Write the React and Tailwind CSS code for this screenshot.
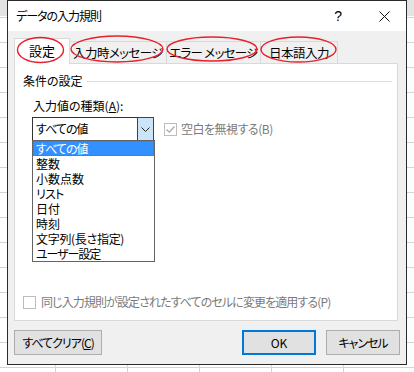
import React from "react";

const items = [
  ["すべての値", "tracking-[-1px]"],
  ["整数", ""],
  ["小数点数", ""],
  ["リスト", "tracking-[-0.8px]"],
  ["日付", ""],
  ["時刻", ""],
  ["文字列(長さ指定)", "tracking-[-0.3px]"],
  ["ユーザー設定", "tracking-[-1.1px]"],
];

function Check({ checked }) {
  return (
    <div className="w-[13px] h-[13px] border border-[#bcbcbc] bg-white flex items-center justify-center shrink-0">
      {checked && (
        <svg width="11" height="11" viewBox="0 0 11 11">
          <path d="M1.5 5.5 L4.2 8.2 L9.5 2.5" fill="none" stroke="#a6a6a6" strokeWidth="1.2" />
        </svg>
      )}
    </div>
  );
}

export default function App() {
  return (
    <div className="relative w-[414px] h-[372px] overflow-hidden bg-white [background-image:linear-gradient(to_bottom,#e3e3e3_16px,transparent_16px),linear-gradient(to_bottom,#d4d4d4_1px,transparent_1px),linear-gradient(to_right,#d4d4d4_1px,transparent_1px)] [background-size:100%_16px,72px_25px,72px_25px] [background-repeat:no-repeat,repeat,repeat] [background-position:0_0,55px_17px,55px_17px] font-['Noto_Sans_CJK_JP','Noto_Sans',sans-serif] [font-feature-settings:'palt'] text-[12px] leading-[16px] text-black">
      <div className="ml-[7px] w-[400px] h-[365px] border border-[#2b2b2b] bg-[#f0f0f0] flex flex-col">
        {/* title bar */}
        <div className="h-[30px] bg-white flex items-center pl-[8px] shrink-0">
          <span className="text-[12px] tracking-[-1px]">データの入力規則</span>
          <span className="ml-auto text-[14px] font-['Liberation_Sans',sans-serif] mr-[37px]">?</span>
          <svg width="11" height="11" viewBox="0 0 11 11" className="mr-[16px]">
            <path d="M0.5 0.5 L10.5 10.5 M10.5 0.5 L0.5 10.5" stroke="#111" strokeWidth="1" />
          </svg>
        </div>
        {/* body */}
        <div className="flex-1 flex flex-col px-[6px] pt-[7px]">
          {/* tabs */}
          <div className="flex items-end h-[25px] relative z-10">
            <div className="w-[56px] h-[26px] -mb-px bg-white border border-b-0 border-[#d9d9d9] flex items-center justify-center pb-[2px] text-[13px]">設定</div>
            <div className="w-[97px] h-[22px] bg-[#f0f0f0] border border-l-0 border-b-0 border-[#d9d9d9] flex items-center justify-center tracking-[-0.6px] text-[12.5px]">入力時メッセージ</div>
            <div className="w-[94px] h-[22px] bg-[#f0f0f0] border border-l-0 border-b-0 border-[#d9d9d9] flex items-center justify-center tracking-[-0.7px] text-[12.5px]">エラー メッセージ</div>
            <div className="w-[77px] h-[22px] bg-[#f0f0f0] border border-l-0 border-b-0 border-[#d9d9d9] flex items-center justify-center tracking-[-0.5px] text-[12.5px]">日本語入力</div>
          </div>
          {/* panel */}
          <div className="w-[384px] h-[258px] bg-white border border-[#d9d9d9] flex flex-col">
            <div className="mt-[9px] h-[16px] flex items-center pl-[8px] pr-[5px]">
              <span>条件の設定</span>
              <div className="flex-1 h-px bg-[#dcdcdc] ml-[4px]" />
            </div>
            <div className="mt-[9px] h-[16px] pl-[18px]">
              入力値の種類(<span className="underline">A</span>):
            </div>
            <div className="mt-[3px] flex items-center pl-[17px]">
              <div className="relative w-[122px] h-[24px] border border-[#333] flex items-center">
                <span className="pl-[3px] flex-1 tracking-[-1px]">すべての値</span>
                <div className="w-[17px] h-[24px] -mr-px -my-px border border-[#005499] bg-[#cce4f7] flex items-center justify-center">
                  <svg width="9" height="5" viewBox="0 0 9 5">
                    <path d="M0.5 0.5 L4.5 4.5 L8.5 0.5" fill="none" stroke="#222" strokeWidth="1" />
                  </svg>
                </div>
                {/* dropdown list */}
                <div className="absolute left-[-1px] top-[22px] w-[123px] border border-[#646464] bg-white flex flex-col z-20">
                  {items.map(([t, tr], i) => (
                    <div
                      key={t}
                      className={
                        i === 0
                          ? "h-[15px] leading-[13px] pl-[2px] bg-[#3390ff] text-white border border-dotted border-[#b06010] " + tr
                          : "h-[15px] leading-[15px] pl-[3px] " + tr
                      }
                    >
                      {t}
                    </div>
                  ))}
                </div>
              </div>
              <div className="ml-[10px] flex items-center gap-[4px] text-[#7a7a7a]">
                <Check checked />
                <span className="tracking-[-0.5px]">空白を無視する(B)</span>
              </div>
            </div>
            <div className="mt-auto mb-[10px] pl-[8px] flex items-center gap-[5px] text-[#7a7a7a]">
              <Check />
              <span className="tracking-[-0.9px]">同じ入力規則が設定されたすべてのセルに変更を適用する(P)</span>
            </div>
          </div>
          {/* buttons */}
          <div className="mt-[9px] flex items-center">
            <div className="w-[88px] h-[25px] bg-[#e1e1e1] border border-[#adadad] flex items-center justify-center tracking-[-1px]">
              すべてクリア(<span className="underline">C</span>)
            </div>
            <div className="ml-auto w-[74px] h-[25px] bg-[#e1e1e1] border-2 border-[#0078d7] flex items-center justify-center">OK</div>
            <div className="ml-[10px] w-[74px] h-[25px] bg-[#e1e1e1] border border-[#adadad] flex items-center justify-center tracking-[-1px]">キャンセル</div>
          </div>
        </div>
      </div>
      <svg className="absolute left-0 top-0 pointer-events-none z-30" width="414" height="372" viewBox="0 0 414 372">
        <g fill="none" stroke="#e8202a" strokeWidth="1.4">
          <ellipse cx="40.5" cy="50" rx="23" ry="12.5" />
          <ellipse cx="117" cy="49" rx="46" ry="13" />
          <ellipse cx="212" cy="49" rx="45" ry="12" />
          <ellipse cx="298.5" cy="49.5" rx="37.5" ry="12.5" />
        </g>
      </svg>
    </div>
  );
}
